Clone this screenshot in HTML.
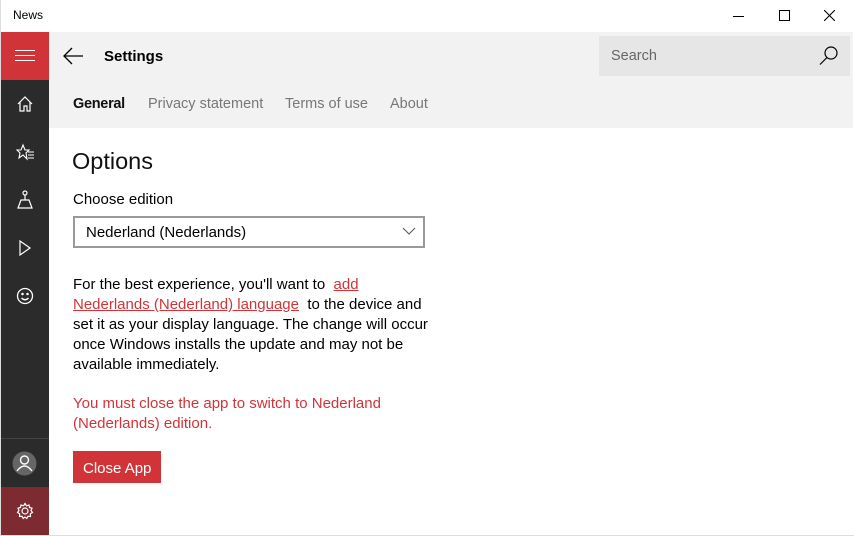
<!DOCTYPE html>
<html><head><meta charset="utf-8"><style>
body{margin:0;width:854px;height:536px;position:relative;overflow:hidden;background:#fff;font-family:"Liberation Sans",sans-serif;color:#000}
.a{position:absolute;white-space:nowrap}
svg{position:absolute}
</style></head><body>
<div class="a" style="left:0;top:0;width:853px;height:535px;border:1px solid #ddd;border-top:none"></div>
<div class="a" style="left:13px;top:8px;font-size:12px">News</div>
<div class="a" style="left:733px;top:16px;width:11px;height:1px;background:#000"></div>
<div class="a" style="left:779px;top:10px;width:9px;height:9px;border:1px solid #000"></div>
<svg style="left:824px;top:10px" width="11" height="11"><path d="M0 0L11 11M11 0L0 11" stroke="#000" stroke-width="1.1"/></svg>
<div class="a" style="left:1px;top:32px;width:48px;height:503px;background:#2b2b2b"></div>
<div class="a" style="left:1px;top:32px;width:48px;height:48px;background:#d13438"></div>
<div class="a" style="left:15px;top:50px;width:20px;height:1px;background:#fff;box-shadow:0 5px 0 #fff,0 10px 0 #fff"></div>
<div class="a" style="left:1px;top:438px;width:48px;height:1px;background:#444"></div>
<div class="a" style="left:1px;top:487px;width:48px;height:48px;background:#7d2a31"></div>
<svg style="left:16px;top:95px" width="18" height="18" fill="none" stroke="#fff" stroke-width="1.2"><path d="M2 9L9 2L16 9M4 7V16H8V11H11V16H14V7"/></svg>
<svg style="left:16px;top:143px" width="20" height="20" fill="none" stroke="#fff" stroke-width="1.1"><path d="M7 2L9 7H13L10 10L11 16L7 12L3 15L4 10L1 7H5Z M12 9H18M12 12H18M12 15H18"/></svg>
<svg style="left:16px;top:190px" width="18" height="20" fill="none" stroke="#fff" stroke-width="1.2"><circle cx="9" cy="3" r="2"/><path d="M9 5V10M5 10H13L16 18H2Z"/></svg>
<svg style="left:18px;top:240px" width="14" height="16" fill="none" stroke="#fff" stroke-width="1.2"><path d="M2 1L12 8L2 15Z"/></svg>
<svg style="left:16px;top:287px" width="18" height="18" fill="none" stroke="#fff" stroke-width="1.3"><circle cx="9" cy="9" r="7.5"/><circle cx="6.5" cy="7" r=".6" fill="#fff"/><circle cx="11.5" cy="7" r=".6" fill="#fff"/><path d="M5.5 11Q9 14.5 12.5 11"/></svg>
<svg style="left:12px;top:451px" width="25" height="25"><circle cx="12.5" cy="12.5" r="12" fill="#666"/><g fill="none" stroke="#fff" stroke-width="1.4"><circle cx="12.5" cy="9" r="4"/><path d="M5 20Q12.5 10 20 20"/></g></svg>
<svg style="left:16px;top:502px" width="18" height="18" fill="none" stroke="#fff" stroke-width="1.2"><circle cx="9" cy="9" r="3"/><path d="M9 1.5L10.5 3.8L13 3L13.5 5.5L16 6.2L15 8.5L16.5 10.5L14.3 11.8L14.5 14.5L12 14.3L10.8 16.5L9 15L7.2 16.5L6 14.3L3.5 14.5L3.7 11.8L1.5 10.5L3 8.5L2 6.2L4.5 5.5L5 3L7.5 3.8Z"/></svg>
<div class="a" style="left:49px;top:32px;width:804px;height:96px;background:#f2f2f2"></div>
<svg style="left:62px;top:46px" width="22" height="20" fill="none" stroke="#000" stroke-width="1.3"><path d="M21 10H2M10 2L2 10L10 18"/></svg>
<div class="a" style="left:104px;top:48px;font-size:15px;font-weight:bold">Settings</div>
<div class="a" style="left:599px;top:36px;width:251px;height:40px;background:#e6e6e6"></div>
<div class="a" style="left:611px;top:48px;font-size:14.5px;color:#666">Search</div>
<svg style="left:818px;top:45px" width="22" height="22" fill="none" stroke="#000" stroke-width="1.2"><circle cx="13" cy="8" r="6"/><path d="M9 12.5L2 19.5"/></svg>
<div class="a" style="left:73px;top:96px;font-size:14.5px;font-weight:bold;color:#111;letter-spacing:-0.3px">General</div>
<div class="a" style="left:148px;top:96px;font-size:14.5px;color:#777">Privacy statement</div>
<div class="a" style="left:285px;top:96px;font-size:14.5px;color:#777">Terms of use</div>
<div class="a" style="left:390px;top:96px;font-size:14.5px;color:#777">About</div>
<div class="a" style="left:72px;top:148px;font-size:23.5px;color:#111">Options</div>
<div class="a" style="left:73px;top:191px;font-size:15px">Choose edition</div>
<div class="a" style="left:73px;top:216px;width:348px;height:28px;border:2px solid #999"></div>
<div class="a" style="left:86px;top:224px;font-size:15px">Nederland (Nederlands)</div>
<svg style="left:402px;top:227px" width="14" height="8" fill="none" stroke="#555"><path d="M1 1L7 7L13 1"/></svg>
<div class="a" style="left:73px;top:275px;font-size:15px;line-height:20px">For the best experience, you'll want to &nbsp;<span style="color:#d13438;text-decoration:underline">add</span><br><span style="color:#d13438;text-decoration:underline">Nederlands (Nederland) language</span> &nbsp;to the device and<br>set it as your display language. The change will occur<br>once Windows installs the update and may not be<br>available immediately.</div>
<div class="a" style="left:73px;top:394px;font-size:15px;line-height:20px;color:#d13438">You must close the app to switch to Nederland<br>(Nederlands) edition.</div>
<div class="a" style="left:73px;top:451px;width:88px;height:32px;background:#d13438"></div>
<div class="a" style="left:83px;top:460px;font-size:15px;color:#fff">Close App</div>
</body></html>
